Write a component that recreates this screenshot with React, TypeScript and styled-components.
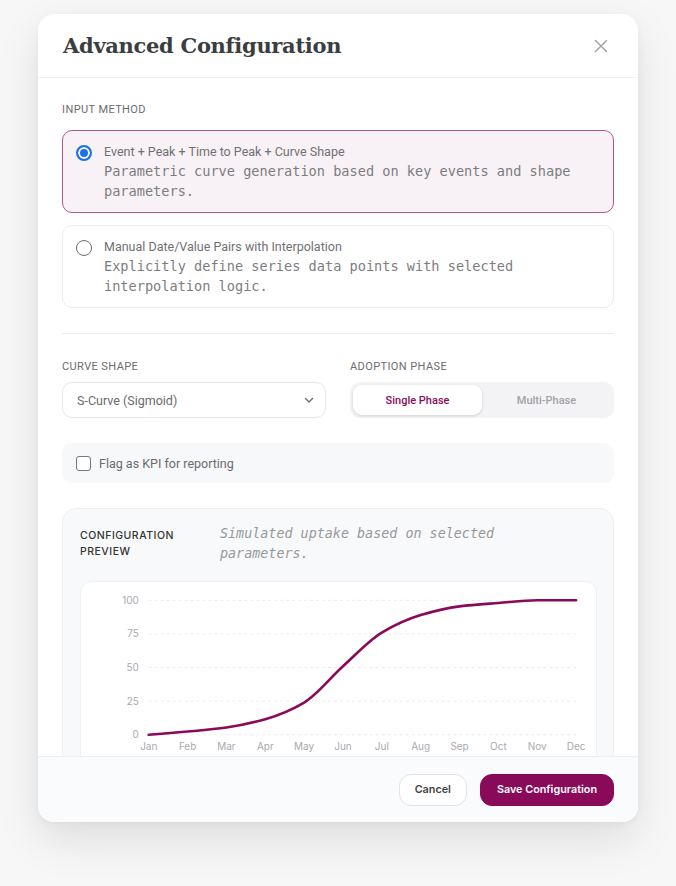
import React, { useState } from 'react';
import styled, { createGlobalStyle } from 'styled-components';

const GlobalStyle = createGlobalStyle`
  html, body {
    margin: 0;
    padding: 0;
    background: #f7f7f8;
    font-family: Roboto, "Noto Sans", sans-serif;
  }
  * { box-sizing: border-box; }
`;

const MONO = `"DejaVu Sans Mono", "Liberation Mono", monospace`;
const BRAND = '#8a0a5a';

// ---------- chart data ----------
const MONTHS = ['Jan', 'Feb', 'Mar', 'Apr', 'May', 'Jun', 'Jul', 'Aug', 'Sep', 'Oct', 'Nov', 'Dec'];
const VALUES = [0, 2.4, 5.4, 11.6, 24, 51, 76, 89, 95.5, 98, 100, 100];

const CH = { left: 68, step: 39, top: 18, bottom: 153 };
const px = (i: number) => CH.left + i * CH.step;
const py = (v: number) => CH.bottom - (v / 100) * (CH.bottom - CH.top);

// monotone cubic, like recharts "monotone"
function monotonePath(xs: number[], ys: number[]) {
  const n = xs.length;
  const d: number[] = [];
  const m: number[] = [];
  for (let i = 0; i < n - 1; i++) d.push((ys[i + 1] - ys[i]) / (xs[i + 1] - xs[i]));
  m[0] = d[0];
  m[n - 1] = d[n - 2];
  for (let i = 1; i < n - 1; i++) {
    const a = d[i - 1];
    const b = d[i];
    m[i] = a * b <= 0 ? 0 : (2 * a * b) / (a + b);
  }
  let p = `M${xs[0]},${ys[0]}`;
  for (let i = 0; i < n - 1; i++) {
    const h = (xs[i + 1] - xs[i]) / 3;
    p += ` C${xs[i] + h},${ys[i] + m[i] * h} ${xs[i + 1] - h},${ys[i + 1] - m[i + 1] * h} ${xs[i + 1]},${ys[i + 1]}`;
  }
  return p;
}

// ---------- styled parts ----------
const Page = styled.div`
  width: 676px;
  height: 886px;
  padding: 14px 38px 0 38px;
`;

const Modal = styled.div`
  width: 600px;
  height: 808px;
  background: #fff;
  border-radius: 16px;
  box-shadow: 0 18px 44px rgba(0, 0, 0, 0.1), 0 2px 8px rgba(0, 0, 0, 0.04);
  display: flex;
  flex-direction: column;
  overflow: hidden;
`;

const Header = styled.div`
  display: flex;
  align-items: center;
  justify-content: space-between;
  height: 64px;
  flex: none;
  padding: 0 30px 0 25px;
  border-bottom: 1px solid #f1f1f3;
`;

const Title = styled.h2`
  margin: 0;
  font-family: "DejaVu Serif", "Liberation Serif", serif;
  font-size: 21px;
  font-weight: 700;
  color: #3b3e41;
  letter-spacing: -0.3px;
`;

const CloseButton = styled.button`
  border: 0;
  background: none;
  padding: 0;
  display: flex;
  color: #a4a4a8;
  cursor: pointer;
`;

const Body = styled.div`
  flex: 1;
  min-height: 0;
  overflow: hidden;
  padding: 24px 24px 0 24px;
`;

const SectionLabel = styled.div<{ $tight?: boolean }>`
  font-size: 11px;
  line-height: 16px;
  letter-spacing: 0.4px;
  text-transform: uppercase;
  color: #6c6c70;
  margin-bottom: ${(p) => (p.$tight ? '0' : '12px')};
`;

const OptionList = styled.div`
  display: flex;
  flex-direction: column;
  gap: 12px;
`;

const OptionCard = styled.label<{ $active: boolean }>`
  display: flex;
  gap: 12px;
  padding: 12px 16px 11px 13px;
  border-radius: 10px;
  border: 1px solid ${(p) => (p.$active ? '#b4558f' : '#ececef')};
  background: ${(p) => (p.$active ? '#f8f1f5' : '#fff')};
  cursor: pointer;
`;

const Radio = styled.span<{ $checked: boolean }>`
  flex: none;
  width: 16px;
  height: 16px;
  margin-top: 2px;
  border-radius: 50%;
  border: ${(p) => (p.$checked ? '2px solid #1a73e8' : '1.5px solid #6f6f73')};
  background: ${(p) => (p.$checked ? '#1a73e8' : '#fff')};
  box-shadow: ${(p) => (p.$checked ? 'inset 0 0 0 2px #fff' : 'none')};
`;

const OptionText = styled.div`
  display: flex;
  flex-direction: column;
`;

const OptionTitle = styled.div`
  font-size: 12.5px;
  line-height: 18px;
  color: #707074;
`;

const OptionDesc = styled.div`
  font-family: ${MONO};
  font-size: 13.6px;
  line-height: 20px;
  color: #7d7d81;
`;

const Divider = styled.hr`
  border: 0;
  border-top: 1px solid #ececef;
  margin: 25px 0 25px 0;
`;

const FieldRow = styled.div`
  display: grid;
  grid-template-columns: 1fr 1fr;
  gap: 24px;
`;

const Field = styled.div`
  display: flex;
  flex-direction: column;
  gap: 7px;
`;

const SelectBox = styled.div`
  height: 36px;
  border: 1px solid #e6e6e9;
  border-radius: 10px;
  display: flex;
  align-items: center;
  justify-content: space-between;
  padding: 0 10px 0 14px;
  font-size: 12.5px;
  color: #6b6b6f;
  background: #fff;
`;

const Segmented = styled.div`
  height: 36px;
  background: #f3f3f5;
  border-radius: 10px;
  padding: 3px;
  display: grid;
  grid-template-columns: 1fr 1fr;
`;

const Segment = styled.button<{ $active: boolean }>`
  border: 0;
  border-radius: 9px;
  font-family: Roboto, sans-serif;
  font-size: 11px;
  font-weight: 500;
  color: ${(p) => (p.$active ? BRAND : '#a2a2a6')};
  background: ${(p) => (p.$active ? '#fff' : 'transparent')};
  box-shadow: ${(p) => (p.$active ? '0 1px 3px rgba(0,0,0,0.14)' : 'none')};
  cursor: pointer;
`;

const KpiRow = styled.label`
  margin-top: 25px;
  height: 40px;
  border-radius: 10px;
  background: #f7f8fa;
  display: flex;
  align-items: center;
  gap: 8px;
  padding: 0 14px;
  font-size: 12.5px;
  color: #6b6b6f;
  cursor: pointer;
`;

const CheckBox = styled.span`
  width: 15px;
  height: 15px;
  border: 1.5px solid #76767a;
  border-radius: 3px;
  background: #fff;
`;

const PreviewCard = styled.div`
  margin-top: 25px;
  border: 1px solid #eef0f3;
  background: #f8f9fb;
  border-radius: 14px;
  padding: 15px 16px 16px 17px;
`;

const PreviewHeader = styled.div`
  display: flex;
  gap: 24px;
  align-items: flex-start;
  margin-bottom: 17px;
`;

const PreviewLabel = styled.div`
  width: 116px;
  font-family: Inter, Roboto, sans-serif;
  font-size: 10.5px;
  font-weight: 500;
  line-height: 16px;
  letter-spacing: 0.5px;
  color: #333;
  text-transform: uppercase;
  padding-top: 4px;
`;

const PreviewDesc = styled.div`
  max-width: 300px;
  font-family: ${MONO};
  font-style: italic;
  font-size: 13.4px;
  line-height: 20px;
  color: #98989c;
`;

const ChartBox = styled.div`
  background: #fff;
  border: 1px solid #f0f1f4;
  border-radius: 12px;
  height: 200px;
`;

const AxisText = styled.text`
  font-family: Inter, "Liberation Sans", sans-serif;
  font-size: 10px;
  fill: #a9a9ad;
`;

const Footer = styled.div`
  height: 66px;
  flex: none;
  border-top: 1px solid #eeeff2;
  background: #fafbfc;
  display: flex;
  align-items: center;
  justify-content: flex-end;
  gap: 13px;
  padding: 0 24px;
`;

const Button = styled.button<{ $primary?: boolean }>`
  height: 32px;
  border-radius: 12px;
  padding: 0 ${(p) => (p.$primary ? '16px' : '15px')};
  font-family: Inter, Roboto, sans-serif;
  font-size: 10.8px;
  font-weight: 600;
  cursor: pointer;
  border: 1px solid ${(p) => (p.$primary ? BRAND : '#e3e3e6')};
  background: ${(p) => (p.$primary ? BRAND : '#fff')};
  color: ${(p) => (p.$primary ? '#fff' : '#444')};
`;

// ---------- components ----------
const options = [
  {
    id: 'parametric',
    title: 'Event + Peak + Time to Peak + Curve Shape',
    desc: 'Parametric curve generation based on key events and shape parameters.',
  },
  {
    id: 'manual',
    title: 'Manual Date/Value Pairs with Interpolation',
    desc: 'Explicitly define series data points with selected interpolation logic.',
  },
];

const PreviewChart = () => {
  const xs = VALUES.map((_, i) => px(i));
  const ys = VALUES.map((v) => py(v));
  return (
    <svg width="100%" height="200" viewBox="0 0 517 200">
      {[0, 25, 50, 75, 100].map((t) => (
        <g key={t}>
          <line
            x1={px(0)}
            x2={px(11)}
            y1={py(t)}
            y2={py(t)}
            stroke="#ececef"
            strokeDasharray="3 3"
          />
          <AxisText x={58} y={py(t) + 3.5} textAnchor="end">
            {t}
          </AxisText>
        </g>
      ))}
      {MONTHS.map((m, i) => (
        <AxisText key={m} x={px(i)} y={168} textAnchor="middle">
          {m}
        </AxisText>
      ))}
      <path d={monotonePath(xs, ys)} fill="none" stroke={BRAND} strokeWidth={2.6} strokeLinecap="round" />
    </svg>
  );
};

const App: React.FC = () => {
  const [method, setMethod] = useState('parametric');
  const [phase, setPhase] = useState<'single' | 'multi'>('single');

  return (
    <>
      <GlobalStyle />
      <Page>
        <Modal>
          <Header>
            <Title>Advanced Configuration</Title>
            <CloseButton aria-label="Close">
              <svg width="14" height="14" viewBox="0 0 14 14">
                <path d="M1.5 1.5 L12.5 12.5 M12.5 1.5 L1.5 12.5" stroke="currentColor" strokeWidth="1.5" strokeLinecap="round" />
              </svg>
            </CloseButton>
          </Header>

          <Body>
            <SectionLabel>Input Method</SectionLabel>
            <OptionList>
              {options.map((o) => (
                <OptionCard key={o.id} $active={method === o.id} onClick={() => setMethod(o.id)}>
                  <Radio $checked={method === o.id} />
                  <OptionText>
                    <OptionTitle>{o.title}</OptionTitle>
                    <OptionDesc>{o.desc}</OptionDesc>
                  </OptionText>
                </OptionCard>
              ))}
            </OptionList>

            <Divider />

            <FieldRow>
              <Field>
                <SectionLabel $tight>Curve Shape</SectionLabel>
                <SelectBox>
                  S-Curve (Sigmoid)
                  <svg width="12" height="12" viewBox="0 0 12 12">
                    <path d="M2.5 4.5 L6 8 L9.5 4.5" fill="none" stroke="#6b6b6f" strokeWidth="1.4" strokeLinecap="round" strokeLinejoin="round" />
                  </svg>
                </SelectBox>
              </Field>
              <Field>
                <SectionLabel $tight>Adoption Phase</SectionLabel>
                <Segmented>
                  <Segment $active={phase === 'single'} onClick={() => setPhase('single')}>
                    Single Phase
                  </Segment>
                  <Segment $active={phase === 'multi'} onClick={() => setPhase('multi')}>
                    Multi-Phase
                  </Segment>
                </Segmented>
              </Field>
            </FieldRow>

            <KpiRow>
              <CheckBox />
              Flag as KPI for reporting
            </KpiRow>

            <PreviewCard>
              <PreviewHeader>
                <PreviewLabel>Configuration Preview</PreviewLabel>
                <PreviewDesc>Simulated uptake based on selected parameters.</PreviewDesc>
              </PreviewHeader>
              <ChartBox>
                <PreviewChart />
              </ChartBox>
            </PreviewCard>
          </Body>

          <Footer>
            <Button>Cancel</Button>
            <Button $primary>Save Configuration</Button>
          </Footer>
        </Modal>
      </Page>
    </>
  );
};

export default App;
